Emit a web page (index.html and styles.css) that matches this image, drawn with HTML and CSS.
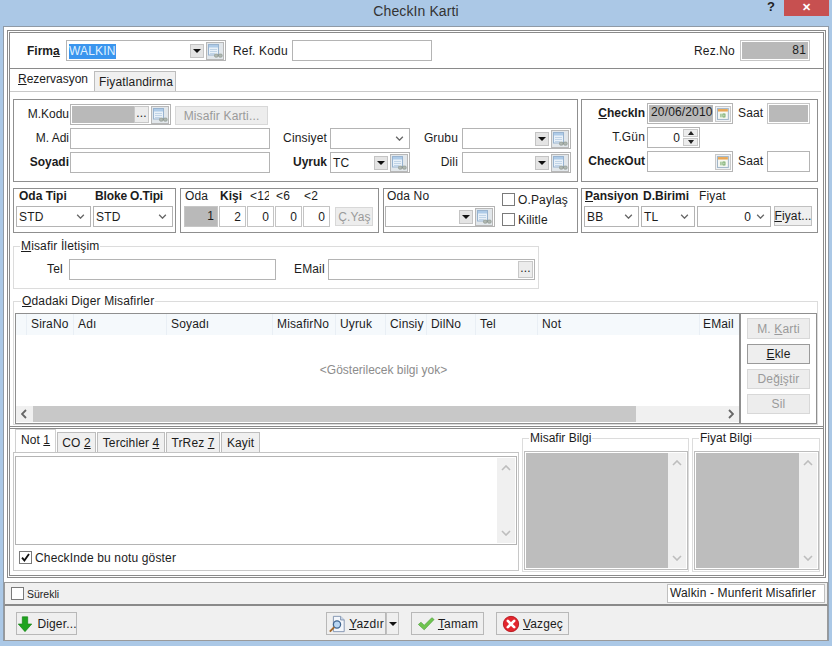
FILE: index.html
```html
<!DOCTYPE html>
<html lang="tr">
<head>
<meta charset="utf-8">
<title>CheckIn Karti</title>
<link rel="stylesheet" href="styles.css">
</head>
<body>
<svg class="defs" width="0" height="0" aria-hidden="true">
  <symbol id="lookup" viewBox="0 0 16 16">
    <rect x="1.500" y="1.500" width="10" height="10.500" fill="#e9f1f9" stroke="#98b3cf"/>
    <rect x="2" y="2" width="9" height="2.500" fill="#aecbe8"/>
    <path d="M3 6.500h7M3 8.500h7M3 10.500h5" stroke="#c0d4e7"/>
    <rect x="7.500" y="11" width="3.600" height="3.200" rx="1.200" fill="#b0b8b2" stroke="#8a938c" stroke-width=".6"/>
    <rect x="11.600" y="11" width="3.600" height="3.200" rx="1.200" fill="#b0b8b2" stroke="#8a938c" stroke-width=".6"/>
    <path d="M10.800 12.200h1.200" stroke="#8a938c"/>
  </symbol>
  <symbol id="calendar" viewBox="0 0 14 14">
    <rect x="1.500" y="1.500" width="11" height="11" fill="#f6f8f4" stroke="#9fb4c7"/>
    <rect x="2" y="2" width="10" height="2.500" fill="#e8a655"/>
    <rect x="4" y="6" width="6" height="5" fill="#dcebd4"/>
    <path d="M5 7v3M7 7h2v3H7z" stroke="#6ba160" stroke-width=".8" fill="none"/>
  </symbol>
  <symbol id="down" viewBox="0 0 10 6"><path d="M1 1l4 4 4-4" fill="none" stroke="currentColor" stroke-width="1.600"/></symbol>
  <symbol id="up" viewBox="0 0 10 6"><path d="M1 5l4-4 4 4" fill="none" stroke="currentColor" stroke-width="1.600"/></symbol>
  <symbol id="left" viewBox="0 0 6 10"><path d="M5 1L1 5l4 4" fill="none" stroke="currentColor" stroke-width="1.800"/></symbol>
  <symbol id="right" viewBox="0 0 6 10"><path d="M1 1l4 4-4 4" fill="none" stroke="currentColor" stroke-width="1.800"/></symbol>
</svg>

<header class="titlebar">
  <span></span>
  <h1 class="title">CheckIn Karti</h1>
  <div class="win-controls"><span class="help">?</span><span class="close">✕</span></div>
</header>

<div class="window">
  <div class="main">
    <section class="firm-row">
      <b class="lbl-firma">Firm<u>a</u></b>
      <div class="combo combo-firma">
        <span class="combo-text"><span class="selected">WALKIN</span></span>
        <span class="drop"><i></i></span>
        <span class="lk"><svg><use href="#lookup"/></svg></span>
      </div>
      <span class="lbl-ref">Ref. Kodu</span>
      <input class="field ref" type="text">
      <span class="lbl-rez">Rez.No</span>
      <div class="readonly rez"><span>81</span></div>
    </section>

    <nav class="tabs tabs-main">
      <span class="tab active"><u>R</u>ezervasyon</span>
      <span class="tab">Fiyatlandirma</span>
    </nav>

    <section class="tab-page">
      <div class="row row-a">
        <div class="panel guest">
          <label class="r l1">M.Kodu</label>
          <div class="mkodu">
            <div class="combo combo-mkodu">
              <span class="gray-fill"></span>
              <span class="dots">...</span>
              <span class="lk"><svg><use href="#lookup"/></svg></span>
            </div>
            <span class="btn disabled btn-card"><span>Misafir Karti...</span></span>
          </div>
          <label class="r l1">M. Adi</label>
          <input class="field" type="text">
          <label class="r">Cinsiyet</label>
          <div class="select m3"><span></span><svg class="chev"><use href="#down"/></svg></div>
          <label class="r">Grubu</label>
          <div class="combo m4"><span class="combo-text"></span><span class="drop"><i></i></span><span class="lk"><svg><use href="#lookup"/></svg></span></div>
          <label class="r l1 strong">Soyadi</label>
          <input class="field" type="text">
          <label class="r strong">Uyruk</label>
          <div class="combo m3"><span class="combo-text">TC</span><span class="drop"><i></i></span><span class="lk"><svg><use href="#lookup"/></svg></span></div>
          <label class="r">Dili</label>
          <div class="combo m4"><span class="combo-text"></span><span class="drop"><i></i></span><span class="lk"><svg><use href="#lookup"/></svg></span></div>
        </div>

        <div class="panel dates">
          <label class="r d strong"><u>C</u>heckIn</label>
          <div class="date"><span class="date-fill">20/06/2010</span><svg class="cal"><use href="#calendar"/></svg></div>
          <label class="c">Saat</label>
          <div class="readonly"></div>
          <label class="r d">T.Gün</label>
          <div class="spin"><span class="spin-val">0</span><span class="spin-btns"><i class="sp-up"></i><i class="sp-down"></i></span></div>
          <span></span><span></span>
          <label class="r d strong">CheckOut</label>
          <div class="date"><span class="date-blank"></span><svg class="cal"><use href="#calendar"/></svg></div>
          <label class="c">Saat</label>
          <input class="field" type="text">
        </div>
      </div>

      <div class="row row-b">
        <div class="panel room-type">
          <b>Oda Tipi</b><b>Bloke O.Tipi</b>
          <div class="select"><span>STD</span><svg class="chev"><use href="#down"/></svg></div>
          <div class="select"><span>STD</span><svg class="chev"><use href="#down"/></svg></div>
        </div>
        <div class="panel counts">
          <span>Oda</span><b class="kisi">Kişi</b><span class="clip">&lt;12</span><span class="mid">&lt;6</span><span class="mid">&lt;2</span><span></span>
          <div class="readonly num"><span>1</span></div>
          <div class="num">2</div><div class="num">0</div><div class="num">0</div><div class="num">0</div>
          <span class="btn disabled btn-yas"><span>Ç.Yaş</span></span>
        </div>
        <div class="panel room-no">
          <div class="room-no-left">
            <span class="room-lbl">Oda No</span>
            <div class="combo"><span class="combo-text"></span><span class="drop"><i></i></span><span class="lk"><svg><use href="#lookup"/></svg></span></div>
          </div>
          <div class="room-checks">
            <div class="check-row"><span class="check"></span>O.Paylaş</div>
            <div class="check-row"><span class="check"></span>Kilitle</div>
          </div>
        </div>
        <div class="panel board">
          <b><u>P</u>ansiyon</b><b>D.Birimi</b><span class="fiyat-lbl">Fiyat</span><span></span>
          <div class="select s1"><span>BB</span><svg class="chev"><use href="#down"/></svg></div>
          <div class="select s2"><span>TL</span><svg class="chev"><use href="#down"/></svg></div>
          <div class="select s3 select-num"><span>0</span><svg class="chev"><use href="#down"/></svg></div>
          <span class="btn btn-fiyat"><span><u>F</u>iyat...</span></span>
        </div>
      </div>

      <fieldset class="group contact">
        <legend><u>M</u>isafir İletişim</legend>
        <label class="tel-lbl">Tel</label>
        <input class="field tel" type="text">
        <label class="mail-lbl">EMail</label>
        <div class="mail"><span class="dots">...</span></div>
      </fieldset>

      <fieldset class="group others">
        <legend><u>O</u>dadaki Diger Misafirler</legend>
        <div class="others-box">
          <div class="grid">
            <div class="grid-head">
              <span class="c0"></span><span class="c1">SiraNo</span><span class="c2">Adı</span><span class="c3">Soyadı</span><span class="c4">MisafirNo</span><span class="c5">Uyruk</span><span class="c6">Cinsiy</span><span class="c7">DilNo</span><span class="c8">Tel</span><span class="c9">Not</span><span class="c10">EMail</span>
            </div>
            <div class="grid-empty">&lt;Gösterilecek bilgi yok&gt;</div>
            <div class="hscroll">
              <svg class="arrow-h"><use href="#left"/></svg>
              <span class="thumb"></span>
              <svg class="arrow-h"><use href="#right"/></svg>
            </div>
          </div>
          <div class="grid-btns">
            <span class="btn disabled b-kart"><span>M. <u>K</u>arti</span></span>
            <span class="btn b-ekle"><span><u>E</u>kle</span></span>
            <span class="btn disabled b-deg"><span>Değ<u>i</u>ştir</span></span>
            <span class="btn disabled b-sil"><span>Sil</span></span>
          </div>
        </div>
      </fieldset>
    </section>

    <section class="notes">
      <div class="notes-left">
        <nav class="tabs tabs-notes">
          <span class="tab active t1">Not <u>1</u></span>
          <span class="tab t2">CO <u>2</u></span>
          <span class="tab t3">Tercihler <u>4</u></span>
          <span class="tab t4">TrRez <u>7</u></span>
          <span class="tab t5">Kayit</span>
        </nav>
        <div class="note-page">
          <div class="memo">
            <div class="memo-body"></div>
            <div class="vscroll"><svg class="arrow-v"><use href="#up"/></svg><svg class="arrow-v"><use href="#down"/></svg></div>
          </div>
          <div class="check-row note-check"><span class="check checked"><svg viewBox="0 0 12 12"><path d="M2.200 6.200l2.600 3 5-7" fill="none" stroke="#111" stroke-width="2"/></svg></span>CheckInde bu notu göster</div>
        </div>
      </div>
      <fieldset class="info info-guest">
        <legend>Misafir Bilgi</legend>
        <div class="info-memo"><div class="info-fill"></div><div class="vscroll"><svg class="arrow-v"><use href="#up"/></svg><svg class="arrow-v"><use href="#down"/></svg></div></div>
      </fieldset>
      <fieldset class="info info-price">
        <legend>Fiyat Bilgi</legend>
        <div class="info-memo"><div class="info-fill"></div><div class="vscroll"><svg class="arrow-v"><use href="#up"/></svg><svg class="arrow-v"><use href="#down"/></svg></div></div>
      </fieldset>
    </section>
  </div>

  <footer class="footer">
    <div class="status">
      <div class="check-row small"><span class="check"></span>Sürekli</div>
      <div class="status-box">Walkin - Munferit Misafirler</div>
    </div>
    <div class="actions">
      <span class="btn act act-diger">
        <svg class="ico" viewBox="0 0 20 20"><path d="M7 2h6v8h4.500L10 18.500 2.500 10H7z" fill="#1fa31f" stroke="#118011" stroke-width=".7"/></svg><span>Di<u>g</u>er...</span>
      </span>
      <div class="print-group">
        <span class="btn act act-print">
          <svg class="ico" viewBox="0 0 20 20"><path d="M6 1.500h8l4 4v13H6z" fill="#f3f6fb" stroke="#7d90ad"/><path d="M14 1.500v4h4" fill="#cfdcec" stroke="#7d90ad"/><circle cx="10" cy="10.500" r="4" fill="#b9d6f2" stroke="#41668f" stroke-width="1.400"/><path d="M7 13.500l-5 5" stroke="#a56a2c" stroke-width="2.200"/></svg><span><u>Y</u>azdır</span>
        </span>
        <span class="btn print-drop"><i></i></span>
      </div>
      <span class="btn act act-ok">
        <svg class="ico" viewBox="0 0 20 20"><path d="M1.500 10.500l3-2.500 3.500 3.500L16.500 3l2.500 2L8 16.500z" fill="#6fc54f" stroke="#4b9a3a" stroke-width=".7"/></svg><span><u>T</u>amam</span>
      </span>
      <span class="btn act act-cancel">
        <svg class="ico" viewBox="0 0 20 20"><circle cx="10" cy="10" r="8.500" fill="#e3262e" stroke="#b5161d"/><path d="M6.500 6.500l7 7M13.500 6.500l-7 7" stroke="#fff" stroke-width="3" stroke-linecap="round"/></svg><span><u>V</u>azgeç</span>
      </span>
    </div>
  </footer>
</div>
</body>
</html>
```
FILE: styles.css
```css
* { box-sizing: border-box; }
html, body { margin: 0; padding: 0; }
body {
  width: 832px; height: 646px; overflow: hidden;
  background: #abc8e6;
  font-family: "Liberation Sans", Arial, sans-serif;
  font-size: 12px; color: #1c1c1c;
  letter-spacing: .15px;
}
.defs { position: absolute; }
u { text-underline-offset: 1px; }
b { font-weight: 700; letter-spacing: 0; }

.titlebar { height: 26px; display: grid; grid-template-columns: 1fr auto 1fr; }
.title { margin: 2px 0 0; font-size: 14px; font-weight: 400; line-height: 18px; color: #333; letter-spacing: .1px; }
.win-controls { display: flex; justify-content: flex-end; align-items: flex-start; padding-right: 3px; }
.help { font-weight: 700; font-size: 13px; line-height: 13px; margin-right: 9px; color: #222; }
.close { width: 45px; height: 16px; background: #c75050; color: #fff; text-align: center; font-size: 11px; line-height: 15px; font-weight: 700; }

.window { margin: 0 3px; height: 615px; background: #fff; border: 1px solid #8f9aa6; border-bottom-width: 0; padding: 3px 2px 0 3px; }
.main { height: 548px; border: 3px double #8a8a8a; }

.firm-row { height: 36px; border-bottom: 1px solid #8a8a8a; display: flex; align-items: center; }
.lbl-firma { margin-left: 17px; width: 39px; }
.combo { display: flex; align-items: center; height: 21px; border: 1px solid #b4b4b4; padding-right: 1px; background: #fff; }
.combo-text { flex: 1; padding-left: 2px; min-width: 0; white-space: nowrap; }
.combo-firma { width: 160px; }
.selected { background: #3a95ee; color: #dff0ff; padding: 0 1px 1px 0; }
.drop { width: 14px; height: 14px; border: 1px solid #c4c4c4; background: #e4e4e4; display: flex; align-items: center; justify-content: center; margin-right: 2px; }
.drop i, .print-drop i { display: block; border: 4px solid transparent; border-top: 4px solid #111; border-bottom: 0; }
.lk { width: 18px; height: 18px; border: 1px solid #b8b8b8; background: #e2e7eb; display: flex; align-items: center; justify-content: center; flex: none; }
.lk svg { width: 16px; height: 16px; }
.lbl-ref { margin-left: 7px; width: 59px; }
.field { display: block; height: 21px; width: 100%; border: 1px solid #b4b4b4; background: #fff; padding: 0 2px; margin: 0; font: inherit; outline: none; border-radius: 0; }
.ref { width: 140px; }
.lbl-rez { margin-left: 262px; width: 46px; }
.readonly { height: 21px; border: 2px solid #fff; outline: 1px solid #c6c6c6; outline-offset: -1px; background: #b9b9b9; padding: 1px; }
.rez { width: 70px; text-align: right; padding-right: 2px; line-height: 15px; }

.tabs { display: flex; align-items: flex-end; }
.tab { display: block; background: #f0f0f0; border: 1px solid #bdbdbd; border-bottom: 0; white-space: nowrap; }
.tab.active { background: #fff; border-color: transparent; }
.tabs-main { height: 23px; border-bottom: 1px solid #c9c9c9; margin-right: 2px; }
.tabs-main .tab { height: 20px; line-height: 20px; padding: 0 4px; width: 82px; }
.tabs-main .tab.active { width: 84px; height: 22px; line-height: 18px; padding: 0 0 0 7px; letter-spacing: 0; }

.tab-page { height: 337px; padding: 7px 0 0 3px; border-bottom: 3px double #8a8a8a; }
.row { display: flex; }
.panel { border: 1px solid #8f8f8f; background: #fff; }
.row-a { height: 83px; }
.guest {
  width: 565px; height: 83px;
  display: grid; grid-template-columns: 56px 200px 57px 83px 48px 114px;
  grid-template-rows: 21px 21px 21px; row-gap: 3px; align-content: start; padding-top: 4px;
}
.r { text-align: right; padding-right: 0; line-height: 21px; white-space: nowrap; }
.l1 { padding-right: 1px; letter-spacing: 0; }
.d { padding-right: 2px; }
.strong { font-weight: 700; letter-spacing: 0; }
.m3 { margin-left: 3px; }
.m4 { margin-left: 4px; margin-right: 1px; }
.mkodu { grid-column: 2 / 7; display: flex; align-items: flex-start; }
.combo-mkodu { width: 101px; padding-left: 1px; }
.gray-fill { width: 63px; height: 17px; background: #b9b9b9; }
.dots { width: 15px; height: 17px; border: 1px solid #c8c8c8; background: #ececec; text-align: center; line-height: 13px; display: block; flex: none; margin-right: 2px; }
.btn { display: flex; align-items: center; justify-content: center; background: #efefef; border: 1px solid #c0c0c0; white-space: nowrap; }
.btn.disabled { color: #9a9a9a; background: #ededed; border-color: #d8d8d8; }
.btn-card { margin-left: 4px; width: 93px; height: 19px; margin-top: 2px; }

.select { display: flex; align-items: center; height: 21px; border: 1px solid #b4b4b4; background: #fff; padding: 0 5px 0 2px; }
.select > span { flex: 1; white-space: nowrap; }
.chev { width: 9px; height: 5px; color: #666; flex: none; }
.select-num > span { text-align: right; padding-right: 5px; }

.dates {
  margin-left: 3px; width: 237px; height: 83px;
  display: grid; grid-template-columns: 65px 86px 34px 43px;
  grid-template-rows: 21px 21px 21px; row-gap: 3px; align-content: start; padding-top: 3px;
}
.date { display: flex; align-items: center; border: 1px solid #b4b4b4; height: 21px; padding: 1px; }
.date-fill { width: 65px; height: 17px; background: #b9b9b9; line-height: 15px; padding-left: 2px; white-space: nowrap; }
.date-blank { width: 65px; }
.cal { width: 16px; height: 16px; margin-left: 2px; border: 1px solid #c8c8c8; background: #eef1f4; }
.c { line-height: 21px; padding-left: 5px; }
.spin { display: flex; align-items: center; width: 53px; height: 21px; border: 1px solid #b4b4b4; padding-right: 1px; }
.spin-val { flex: 1; text-align: right; padding-right: 3px; }
.spin-btns { width: 15px; display: flex; flex-direction: column; gap: 1px; }
.spin-btns i { height: 8px; background: #ececec; border: 1px solid #c8c8c8; display: flex; align-items: center; justify-content: center; }
.sp-up::after { content: ""; border: 3px solid transparent; border-bottom: 4px solid #222; border-top: 0; }
.sp-down::after { content: ""; border: 3px solid transparent; border-top: 4px solid #222; border-bottom: 0; }

.row-b { margin-top: 6px; height: 45px; }
.room-type { width: 163px; display: grid; grid-template-columns: 77px 82px; grid-template-rows: 17px 21px; padding: 0 0 0 2px; align-content: start; }
.room-type b { line-height: 14px; padding: 0 0 0 3px; }
.room-type b:nth-child(2) { padding-left: 2px; letter-spacing: -.15px; }
.room-type .select { width: 75px; }
.room-type .select:last-child { width: 80px; }
.counts { margin-left: 4px; width: 199px; display: grid; grid-template-columns: 35px 28px 28px 28px 28px 45px; grid-template-rows: 17px 21px; padding-left: 3px; }
.counts > span, .counts > b { line-height: 14px; padding-left: 1px; white-space: nowrap; overflow: hidden; }
.counts .clip { padding-left: 3px; width: 22px; }
.num { width: 27px; height: 21px; border: 1px solid #c4c4c4; text-align: right; padding-right: 4px; line-height: 20px; }
.counts .readonly.num { width: 34px; padding: 0 3px 0 0; line-height: 18px; text-align: right; }
.btn-yas { width: 38px; height: 19px; margin: 1px 0 0 4px; }
.room-no { margin-left: 4px; width: 195px; display: flex; padding-left: 1px; }
.room-no-left { width: 112px; }
.room-lbl { display: block; height: 17px; line-height: 14px; padding-left: 2px; }
.room-no .combo { width: 110px; }
.room-checks { display: flex; flex-direction: column; gap: 7px; padding: 4px 0 0 5px; }
.check-row { display: flex; align-items: center; height: 13px; gap: 3px; white-space: nowrap; }
.check { width: 13px; height: 13px; border: 1px solid #7a7a7a; background: #fff; display: block; flex: none; }
.check svg { display: block; width: 11px; height: 11px; }
.board { margin-left: 3px; width: 237px; display: grid; grid-template-columns: 57px 56px 77px 42px; grid-template-rows: 17px 21px; padding-left: 2px; }
.board b, .fiyat-lbl { line-height: 14px; padding-left: 1px; white-space: nowrap; }
.board b:nth-child(2) { padding-left: 2px; }
.fiyat-lbl { padding-left: 2px; }
.s1 { width: 55px; } .s2 { width: 54px; } .s3 { width: 74px; }
.btn-fiyat { width: 38px; height: 20px; }

fieldset { margin: 0; padding: 0; min-width: 0; }
.group { border: 1px solid #dcdcdc; }
.group legend { margin-left: 6px; padding: 0 1px; line-height: 14px; }
.contact { width: 526px; height: 50px; margin-top: 6px; padding: 6px 0 0; }
.tel-lbl { float: left; margin-left: 33px; width: 22px; line-height: 21px; }
.tel { width: 207px; float: left; }
.mail-lbl { float: left; margin-left: 18px; width: 34px; line-height: 21px; }
.mail { float: left; width: 207px; height: 21px; border: 1px solid #b4b4b4; padding: 1px; display: flex; justify-content: flex-end; }
.mail .dots { margin-right: 0; }
.others { margin-top: 5px; width: 805px; height: 131px; padding: 5px 0 0 1px; }
.others-box { display: flex; width: 802px; height: 111px; border: 1px solid #8f8f8f; }
.grid { width: 725px; border-right: 2px solid #8f8f8f; display: flex; flex-direction: column; }
.grid-head { height: 21px; display: flex; background: #f5f9fc; }
.grid-head span { display: block; line-height: 21px; padding-left: 4px; border-right: 1px solid #e9eff5; white-space: nowrap; overflow: hidden; }
.c0 { width: 11px; } .c1 { width: 47px; } .c2 { width: 93px; } .c3 { width: 106px; } .c4 { width: 63px; }
.c5 { width: 50px; } .c6 { width: 41px; } .c7 { width: 49px; } .c8 { width: 62px; } .c9 { width: 162px; }
.grid-head .c10 { width: 38px; border-right: 0; padding-left: 3px; }
.grid-empty { height: 71px; line-height: 71px; text-align: center; color: #8c8c8c; padding-left: 12px; letter-spacing: 0; }
.hscroll { height: 16px; background: #f0f0f0; display: flex; align-items: center; padding: 0 5px; }
.arrow-h { width: 6px; height: 10px; color: #666; flex: none; }
.thumb { width: 603px; height: 16px; background: #c8c8c8; margin: 0 auto 0 6px; }
.grid-btns { flex: 1; padding: 4px 0 0 6px; }
.grid-btns .btn { width: 63px; height: 20px; margin-bottom: 5px; }
.grid-btns .b-kart { height: 21px; }
.grid-btns .b-ekle { border-color: #9a9a9a; background: #eee; }

.notes { display: flex; height: 141px; padding-left: 3px; }
.notes-left { width: 506px; }
.tabs-notes { height: 24px; padding-left: 2px; border-bottom: 1px solid #c4c4c4; }
.tabs-notes .tab { height: 20px; line-height: 20px; text-align: center; margin-right: 1px; letter-spacing: .1px; }
.tabs-notes .tab.active { height: 23px; line-height: 21px; border-color: #d0d0d0; }
.t1 { width: 41px; } .t2 { width: 39px; } .t3 { width: 68px; } .t4 { width: 54px; } .t5 { width: 39px; }
.note-page { height: 118px; border: 1px solid #c8c8c8; border-top: 0; padding: 3px 1px 0; }
.memo { height: 89px; border: 1px solid #b4b4b4; display: flex; padding: 1px; }
.memo-body { flex: 1; }
.vscroll { width: 18px; background: #f0f0f0; display: flex; flex-direction: column; justify-content: space-between; align-items: center; padding: 7px 0; flex: none; }
.arrow-v { width: 10px; height: 6px; color: #bdbdbd; }
.note-check { margin: 6px 0 0 4px; }
.small { font-size: 10.500px; letter-spacing: 0; }
.info { border: 1px solid #dcdcdc; margin-left: 3px; height: 141px; margin-top: 2px; padding: 6px 0 1px 1px; }
.info legend { margin-left: 5px; padding: 0 1px; line-height: 14px; letter-spacing: 0; }
.info-guest { width: 167px; }
.info-price { width: 128px; }
.info-memo { display: flex; height: 119px; border: 1px solid #bdbdbd; padding: 1px; }
.info-fill { flex: 1; background: #bdbdbd; }

.footer { margin: 4px -2px 0 -3px; }
.status { height: 24px; border: 1px solid #9a9a9a; border-bottom: 2px solid #8a8a8a; background: #f0f0f0; display: flex; align-items: center; justify-content: space-between; padding: 0 2px 0 6px; }
.status-box { width: 158px; height: 19px; background: #fff; border: 1px solid #c0c0c0; line-height: 17px; padding-left: 2px; white-space: nowrap; }
.actions { height: 35px; background: #f0f0f0; border: 1px solid #9a9a9a; border-top: 0; display: flex; align-items: flex-start; padding: 6px 0 0 11px; }
.act { height: 23px; gap: 3px; background: #efefef; border-color: #b8b8b8; }
.ico { width: 18px; height: 18px; flex: none; }
.act-diger { width: 61px; }
.print-group { display: flex; margin-left: 249px; }
.act-print { width: 60px; }
.print-drop { width: 13px; height: 23px; }
.act-ok { width: 73px; margin-left: 12px; }
.act-cancel { width: 73px; margin-left: 12px; }
```
